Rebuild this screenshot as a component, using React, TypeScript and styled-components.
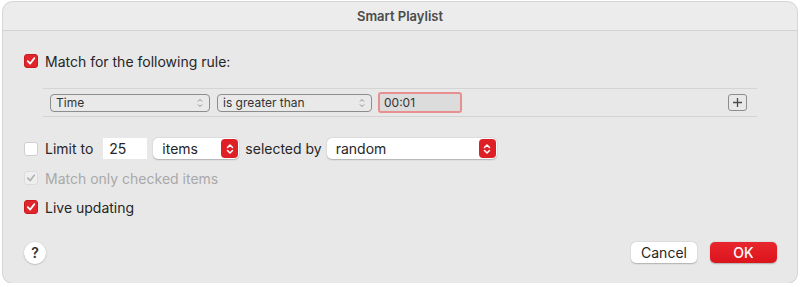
import React from 'react';
import styled, { createGlobalStyle } from 'styled-components';

const GlobalStyle = createGlobalStyle`
  html, body {
    margin: 0;
    padding: 0;
    background: #ffffff;
  }
  body {
    font-family: Inter, 'Liberation Sans', Arial, sans-serif;
    color: #262626;
  }
`;

const Window = styled.div`
  margin: 2px 3px 0 3px;
  width: 794px;
  height: 281px;
  box-sizing: border-box;
  border-radius: 10px;
  background: #e8e8e8;
  box-shadow: 0 0 0 1px #d6d6d6;
  overflow: hidden;
  display: flex;
  flex-direction: column;
`;

const TitleBar = styled.div`
  height: 28px;
  flex: none;
  display: flex;
  align-items: center;
  justify-content: center;
  background: #ececec;
  border-bottom: 1px solid #d2d2d2;
  font-size: 13px;
  font-weight: 600;
  color: #4b4b4b;
`;

const Content = styled.div`
  flex: 1;
  display: flex;
  flex-direction: column;
  padding: 0 21px 0 21px;
`;

const Row = styled.div<{ $top: number; $height?: number }>`
  display: flex;
  align-items: center;
  margin-top: ${({ $top }) => $top}px;
  height: ${({ $height }) => $height ?? 20}px;
  flex: none;
`;

const Label = styled.span<{ $muted?: boolean }>`
  font-size: 14px;
  color: ${({ $muted }) => ($muted ? '#a9a9a9' : '#262626')};
  margin-left: 7px;
  white-space: nowrap;
`;

const Text = styled.span<{ $left: number }>`
  font-size: 14px;
  color: #262626;
  margin-left: ${({ $left }) => $left}px;
  white-space: nowrap;
`;

const Box = styled.div<{ $checked?: boolean; $disabled?: boolean }>`
  width: 14px;
  height: 14px;
  border-radius: 3px;
  box-sizing: border-box;
  display: flex;
  align-items: center;
  justify-content: center;
  flex: none;
  background: ${({ $checked, $disabled }) =>
    $disabled ? '#efefef' : $checked ? '#e0262c' : '#ffffff'};
  border: 1px solid
    ${({ $checked, $disabled }) => ($disabled ? '#dcdcdc' : $checked ? '#c81a20' : '#cfcfcf')};
`;

const Checkbox = ({ checked, disabled }: { checked?: boolean; disabled?: boolean }) => (
  <Box $checked={checked} $disabled={disabled}>
    {checked && (
      <svg width="10" height="10" viewBox="0 0 10 10">
        <path
          d="M1.8 5.2 L4.1 7.6 L8.3 2.2"
          fill="none"
          stroke={disabled ? '#b5b5b5' : '#ffffff'}
          strokeWidth="1.8"
          strokeLinecap="round"
          strokeLinejoin="round"
        />
      </svg>
    )}
  </Box>
);

const RuleBox = styled.div`
  margin: 17px 0 0 19px;
  width: 714px;
  height: 29px;
  box-sizing: border-box;
  border-top: 1px solid #d4d4d4;
  border-bottom: 1px solid #d4d4d4;
  display: flex;
  align-items: center;
  padding-left: 7px;
  flex: none;
`;

const RulePopup = styled.div<{ $width: number; $gap?: number }>`
  width: ${({ $width }) => $width}px;
  height: 18px;
  box-sizing: border-box;
  border: 1px solid #8d8d8d;
  border-radius: 4px;
  margin-left: ${({ $gap }) => $gap ?? 0}px;
  display: flex;
  align-items: center;
  justify-content: space-between;
  padding: 0 6px 0 5px;
  font-size: 12px;
  color: #333333;
  background: #e9e9e9;
`;

const TimeField = styled.div`
  width: 84px;
  height: 21px;
  box-sizing: border-box;
  margin-left: 6px;
  border: 2px solid #e8908f;
  border-radius: 3px;
  background: #dcdcdc;
  display: flex;
  align-items: center;
  padding-left: 4px;
  font-size: 12px;
  color: #333333;
`;

const PlusButton = styled.div`
  margin-left: auto;
  margin-right: 10px;
  width: 19px;
  height: 17px;
  box-sizing: border-box;
  border: 1px solid #8d8d8d;
  border-radius: 3px;
  display: flex;
  align-items: center;
  justify-content: center;
`;

const SmallChevrons = () => (
  <svg width="6" height="10" viewBox="0 0 6 10">
    <path d="M1 3.5 L3 1.5 L5 3.5 M1 6.5 L3 8.5 L5 6.5" fill="none" stroke="#8a8a8a" strokeWidth="1" />
  </svg>
);

const Field = styled.div<{ $width: number; $gap: number }>`
  width: ${({ $width }) => $width}px;
  height: 21px;
  box-sizing: border-box;
  margin-left: ${({ $gap }) => $gap}px;
  background: #ffffff;
  display: flex;
  align-items: center;
  padding-left: 6px;
  font-size: 14px;
  color: #262626;
`;

const Popup = styled.div<{ $width: number; $gap: number }>`
  width: ${({ $width }) => $width}px;
  height: 21px;
  box-sizing: border-box;
  margin-left: ${({ $gap }) => $gap}px;
  background: #ffffff;
  border-radius: 5px;
  box-shadow: 0 0.5px 1.5px rgba(0, 0, 0, 0.25);
  display: flex;
  align-items: center;
  justify-content: space-between;
  padding: 0 1px 0 9px;
  font-size: 14px;
  color: #262626;
`;

const Stepper = styled.div`
  width: 17px;
  height: 19px;
  border-radius: 4px;
  background: #df1f26;
  display: flex;
  align-items: center;
  justify-content: center;
`;

const RedChevrons = () => (
  <Stepper>
    <svg width="8" height="12" viewBox="0 0 8 12">
      <path
        d="M1.5 4.5 L4 2 L6.5 4.5 M1.5 7.5 L4 10 L6.5 7.5"
        fill="none"
        stroke="#ffffff"
        strokeWidth="1.5"
        strokeLinecap="round"
        strokeLinejoin="round"
      />
    </svg>
  </Stepper>
);

const Footer = styled.div`
  margin-top: 25px;
  display: flex;
  align-items: center;
  height: 21px;
  flex: none;
`;

const HelpButton = styled.div`
  width: 22px;
  height: 22px;
  border-radius: 50%;
  background: #ffffff;
  box-shadow: 0 0.5px 1.5px rgba(0, 0, 0, 0.3);
  display: flex;
  align-items: center;
  justify-content: center;
  font-size: 14px;
  font-weight: 600;
  color: #333333;
`;

const ButtonGroup = styled.div`
  margin-left: auto;
  margin-right: -1px;
  display: flex;
  align-items: center;
  gap: 13px;
`;

const Button = styled.div<{ $primary?: boolean }>`
  width: ${({ $primary }) => ($primary ? 67 : 66)}px;
  height: 21px;
  box-sizing: border-box;
  border-radius: 5px;
  display: flex;
  align-items: center;
  justify-content: center;
  font-size: 14px;
  font-weight: ${({ $primary }) => ($primary ? 500 : 400)};
  color: ${({ $primary }) => ($primary ? '#ffffff' : '#262626')};
  background: ${({ $primary }) =>
    $primary ? 'linear-gradient(#e8262d, #dc141c)' : '#ffffff'};
  box-shadow: 0 0.5px 1.5px rgba(0, 0, 0, 0.25);
`;

export default function App() {
  return (
    <>
      <GlobalStyle />
      <Window>
        <TitleBar>Smart Playlist</TitleBar>
        <Content>
          <Row $top={20}>
            <Checkbox checked />
            <Label>Match for the following rule:</Label>
          </Row>
          <RuleBox>
            <RulePopup $width={160}>
              <span>Time</span>
              <SmallChevrons />
            </RulePopup>
            <RulePopup $width={155} $gap={7}>
              <span>is greater than</span>
              <SmallChevrons />
            </RulePopup>
            <TimeField>00:01</TimeField>
            <PlusButton>
              <svg width="11" height="11" viewBox="0 0 11 11">
                <path d="M5.5 1 V10 M1 5.5 H10" stroke="#4a4a4a" strokeWidth="1.3" />
              </svg>
            </PlusButton>
          </RuleBox>
          <Row $top={21} $height={21}>
            <Checkbox />
            <Label>Limit to</Label>
            <Field $width={44} $gap={10}>25</Field>
            <Popup $width={86} $gap={6}>
              <span>items</span>
              <RedChevrons />
            </Popup>
            <Text $left={6}>selected by</Text>
            <Popup $width={170} $gap={5}>
              <span>random</span>
              <RedChevrons />
            </Popup>
          </Row>
          <Row $top={9}>
            <Checkbox checked disabled />
            <Label $muted>Match only checked items</Label>
          </Row>
          <Row $top={9}>
            <Checkbox checked />
            <Label>Live updating</Label>
          </Row>
          <Footer>
            <HelpButton>?</HelpButton>
            <ButtonGroup>
              <Button>Cancel</Button>
              <Button $primary>OK</Button>
            </ButtonGroup>
          </Footer>
        </Content>
      </Window>
    </>
  );
}
